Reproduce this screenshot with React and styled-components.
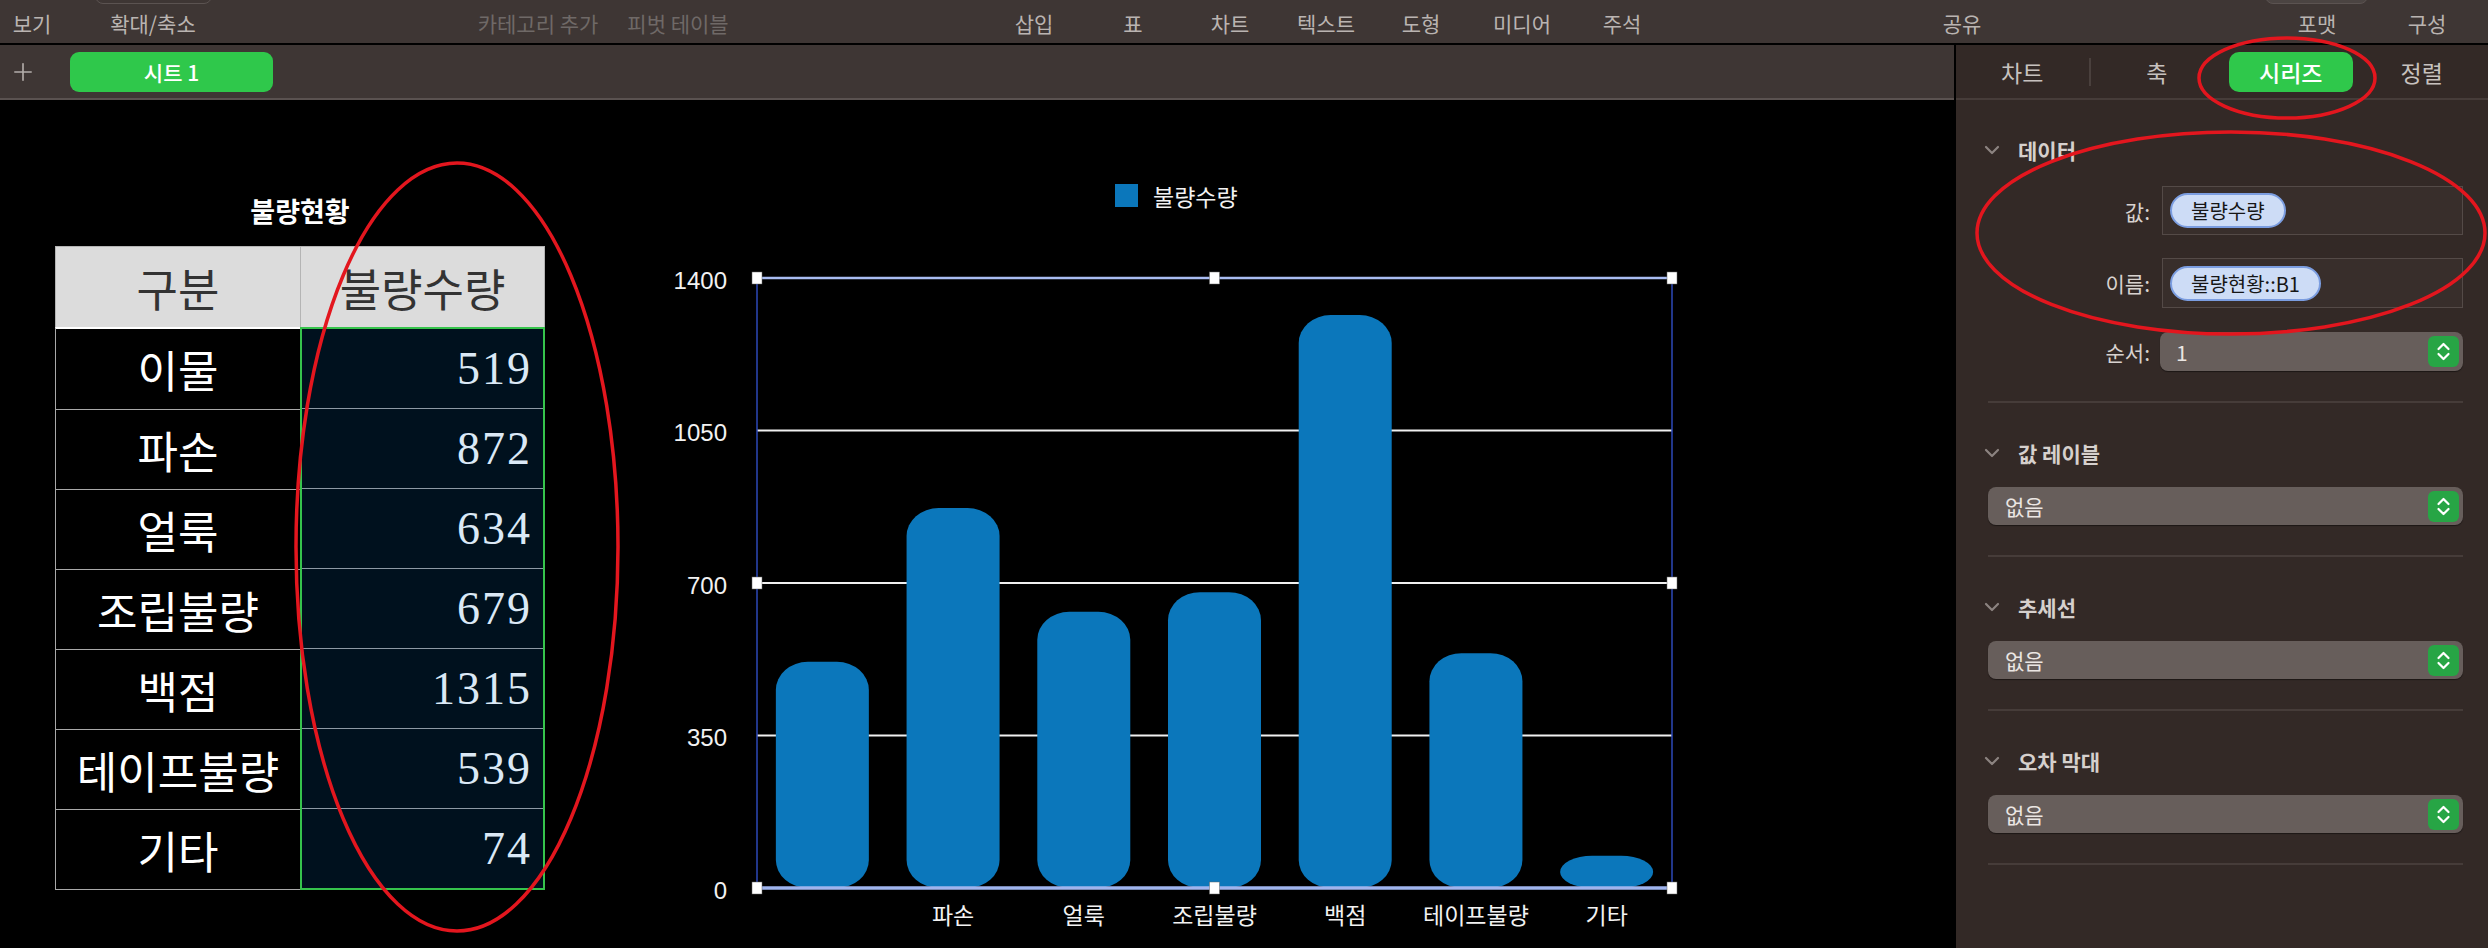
import React from 'react';
import styled, { createGlobalStyle } from 'styled-components';
import { Plus } from 'lucide-react';

const KR = `"Noto Sans CJK KR", "Noto Sans", sans-serif`;

const GlobalStyle = createGlobalStyle`
  html, body {
    margin: 0;
    padding: 0;
    background: #000;
  }
  body {
    width: 2488px;
    height: 948px;
    overflow: hidden;
    font-family: ${KR};
  }
  * {
    box-sizing: border-box;
  }
`;

const Page = styled.div`
  position: relative;
  width: 2488px;
  height: 948px;
  display: flex;
  flex-direction: column;
  background: #000;
  overflow: hidden;
`;

/* ---------- top toolbar ---------- */

const Toolbar = styled.div`
  position: relative;
  flex: none;
  height: 45px;
  padding-top: 4px;
  display: flex;
  align-items: center;
  background: #3e3634;
  border-bottom: 2px solid #000;
`;

const ToolSlot = styled.div`
  flex: none;
  width: 90px;
  margin-left: ${(p) => p.$ml}px;
  display: flex;
  justify-content: center;
  white-space: nowrap;
  font-size: 21px;
  line-height: 1;
  color: ${(p) => (p.$dim ? '#6f6967' : '#bab4b1')};
`;

const TopNub = styled.div`
  position: absolute;
  top: -22px;
  left: ${(p) => p.$left}px;
  width: ${(p) => p.$w}px;
  height: 26px;
  border-radius: 8px;
  border: 1px solid #5b5351;
  background: ${(p) => (p.$filled ? '#4b4442' : 'transparent')};
`;

/* ---------- body ---------- */

const Body = styled.div`
  flex: 1;
  display: flex;
  min-height: 0;
`;

const Workspace = styled.div`
  width: 1954px;
  flex: none;
  display: flex;
  flex-direction: column;
`;

const SheetBar = styled.div`
  flex: none;
  height: 55px;
  display: flex;
  align-items: center;
  padding-left: 9px;
  background: #3e3634;
  border-bottom: 2px solid #5a5250;
  color: #b3adaa;
`;

const SheetTab = styled.div`
  margin-left: 33px;
  width: 203px;
  height: 40px;
  border-radius: 9px;
  background: #2fc84b;
  color: #fff;
  font-size: 21px;
  font-weight: 500;
  display: flex;
  align-items: center;
  justify-content: center;
`;

const Canvas = styled.div`
  flex: 1;
  background: #000;
  display: flex;
  align-items: flex-start;
  padding-left: 55px;
`;

/* ---------- table ---------- */

const TableBlock = styled.div`
  margin-top: 96px;
  width: 490px;
  display: flex;
  flex-direction: column;
`;

const TableTitle = styled.div`
  height: 30px;
  line-height: 30px;
  margin-bottom: 20px;
  text-align: center;
  color: #fff;
  font-size: 27px;
  font-weight: 700;
`;

const Grid = styled.div`
  display: grid;
  grid-template-columns: 245px 245px;
`;

const HeadCell = styled.div`
  height: 81px;
  background: #dcdcdc;
  border-top: 1px solid #b4b4b4;
  border-left: 1px solid #b4b4b4;
  border-right: ${(p) => (p.$last ? '1px solid #b4b4b4' : 'none')};
  display: flex;
  align-items: center;
  justify-content: center;
  font-size: 45px;
  line-height: 1;
  color: #333;
`;

const NameCol = styled.div`
  display: flex;
  flex-direction: column;
  border-top: 2px solid #fff;
  border-left: 1px solid #a9a9a9;
  border-bottom: 1px solid #a9a9a9;
`;

const NameCell = styled.div`
  height: 80px;
  border-top: ${(p) => (p.$first ? 'none' : '1px solid #a9a9a9')};
  display: flex;
  align-items: center;
  justify-content: center;
  color: #fff;
  font-size: 44px;
  line-height: 1;
  white-space: nowrap;
`;

const ValueCol = styled.div`
  display: flex;
  flex-direction: column;
  border: 2px solid #36c44c;
  background: #00111e;
`;

const ValueCell = styled.div`
  flex: 1;
  border-top: ${(p) => (p.$first ? 'none' : '1px solid #8d99a4')};
  display: flex;
  align-items: center;
  justify-content: flex-end;
  padding-right: 11px;
  color: #dbe9f6;
  font-family: 'Liberation Serif', 'DejaVu Serif', serif;
  font-size: 46px;
  letter-spacing: 2px;
  line-height: 1;
`;

/* ---------- chart ---------- */

const ChartSvg = styled.svg`
  flex: none;
  margin-left: 115px;
  margin-top: 70px;
  overflow: visible;
`;

const AxisText = styled.text`
  font-family: 'Liberation Sans', Arial, sans-serif;
  font-size: 24px;
  fill: #f2f2f2;
`;

const CatText = styled.text`
  font-family: ${KR};
  font-size: 23px;
  fill: #f2f2f2;
`;

/* ---------- right panel ---------- */

const Panel = styled.div`
  flex: 1;
  border-left: 2px solid #000;
  background: #332926;
  display: flex;
  flex-direction: column;
`;

const PanelTabs = styled.div`
  flex: none;
  height: 55px;
  display: flex;
  align-items: center;
  border-bottom: 2px solid #463c39;
`;

const Segment = styled.div`
  flex: 1;
  height: 100%;
  display: flex;
  align-items: center;
  justify-content: center;
  font-size: 23px;
  color: #c7c1be;
`;

const SegDivider = styled.div`
  flex: none;
  width: 2px;
  height: 28px;
  background: #4a403d;
`;

const ActivePill = styled.div`
  width: calc(100% - 9px);
  height: 40px;
  margin-left: 6px;
  margin-right: 3px;
  border-radius: 10px;
  background: #2fc84b;
  color: #fff;
  display: flex;
  align-items: center;
  justify-content: center;
  font-size: 23px;
  font-weight: 500;
`;

const Section = styled.div`
  margin: 0 25px 0 32px;
  padding: ${(p) => p.$top}px 0 30px;
  border-bottom: 2px solid #463c39;
  display: flex;
  flex-direction: column;
`;

const SectionHead = styled.div`
  height: 30px;
  display: flex;
  align-items: center;
  margin-left: -4px;
  gap: 18px;
  color: #d6d0cd;
  font-size: 21px;
  font-weight: 700;
`;

const FieldRow = styled.div`
  margin-top: ${(p) => p.$mt}px;
  display: grid;
  grid-template-columns: 162px 1fr;
  column-gap: ${(p) => p.$gap || 12}px;
  align-items: center;
`;

const FieldLabel = styled.div`
  text-align: right;
  font-size: 21px;
  color: #d8d2cf;
`;

const FieldBox = styled.div`
  height: ${(p) => p.$h}px;
  background: #382e2b;
  border: 1px solid #544a47;
  display: flex;
  align-items: center;
  padding-left: 7px;
`;

const Token = styled.div`
  height: 35px;
  padding: 0 19px;
  border-radius: 18px;
  background: #cddcf6;
  border: 2px solid #7b9de0;
  color: #161616;
  font-size: 20px;
  display: flex;
  align-items: center;
`;

const Popup = styled.div`
  height: ${(p) => p.$h || 38}px;
  margin-top: ${(p) => p.$mt || 0}px;
  border-radius: 8px;
  background: #675e5b;
  box-shadow: 0 1px 1px rgba(0, 0, 0, 0.45);
  display: flex;
  align-items: center;
  padding: 0 4px 0 ${(p) => p.$pl || 17}px;
`;

const PopupText = styled.div`
  flex: 1;
  font-size: 21px;
  color: #ebe6e3;
`;

const Stepper = styled.div`
  width: 31px;
  height: 31px;
  border-radius: 6px;
  background: #27a545;
  display: flex;
  align-items: center;
  justify-content: center;
`;

const Annotation = styled.svg`
  position: absolute;
  top: 0;
  left: 0;
  pointer-events: none;
`;

/* ---------- data ---------- */

const toolItems = [
  ['보기', 32],
  ['확대/축소', 153],
  ['카테고리 추가', 538, true],
  ['피벗 테이블', 678, true],
  ['삽입', 1034],
  ['표', 1133],
  ['차트', 1230],
  ['텍스트', 1326],
  ['도형', 1421],
  ['미디어', 1522],
  ['주석', 1622],
  ['공유', 1962],
  ['포맷', 2317],
  ['구성', 2427],
];

const rows = [
  ['이물', 519],
  ['파손', 872],
  ['얼룩', 634],
  ['조립불량', 679],
  ['백점', 1315],
  ['테이프불량', 539],
  ['기타', 74],
];

const Chevron = () => (
  <svg width="16" height="10" viewBox="0 0 16 10">
    <polyline points="2,2 8,8 14,2" fill="none" stroke="#8c8380" strokeWidth="2.2" strokeLinecap="round" strokeLinejoin="round" />
  </svg>
);

const StepIcon = () => (
  <svg width="31" height="31" viewBox="0 0 31 31">
    <polyline points="10.5,13 15.5,8 20.5,13" fill="none" stroke="#fff" strokeWidth="2.2" strokeLinecap="round" strokeLinejoin="round" />
    <polyline points="10.5,18 15.5,23 20.5,18" fill="none" stroke="#fff" strokeWidth="2.2" strokeLinecap="round" strokeLinejoin="round" />
  </svg>
);

const Chart = () => {
  const left = 97;
  const right = 1012;
  const top = 108;
  const bottom = 718;
  const slot = (right - left) / rows.length;
  const barW = 93;
  const toY = (v) => bottom - (v / 1400) * (bottom - top);
  const ticks = [1400, 1050, 700, 350, 0];
  const midX = (left + right) / 2;
  const midY = (top + bottom) / 2;
  const handles = [
    [left, top], [midX, top], [right, top],
    [left, midY], [right, midY],
    [left, bottom], [midX, bottom], [right, bottom],
  ];

  return (
    <ChartSvg width="1040" height="770" viewBox="0 0 1040 770">
      <rect x="455" y="14" width="23" height="23" fill="#0b77bb" />
      <CatText x="493" y="26" dominantBaseline="central">불량수량</CatText>

      {ticks.slice(1, 4).map((t) => (
        <line key={t} x1={left} x2={right} y1={toY(t)} y2={toY(t)} stroke="#f0f0f0" strokeWidth="2" />
      ))}

      {rows.map(([name, v], i) => {
        const h = (v / 1400) * (bottom - top);
        const x = left + i * slot + (slot - barW) / 2;
        return (
          <rect
            key={name}
            x={x}
            y={bottom - h}
            width={barW}
            height={h}
            rx={32}
            ry={Math.min(28, h / 2)}
            fill="#0b77bb"
          />
        );
      })}

      <line x1={left} x2={left} y1={top} y2={bottom} stroke="#2c48b8" strokeWidth="1.5" />
      <line x1={right} x2={right} y1={top} y2={bottom} stroke="#2c48b8" strokeWidth="1.5" />
      <line x1={left} x2={right} y1={top} y2={top} stroke="#a9bcf2" strokeWidth="2.5" />
      <line x1={left} x2={right} y1={bottom} y2={bottom} stroke="#9fb4ee" strokeWidth="3.5" />

      {ticks.map((t) => (
        <AxisText key={t} x="67" y={toY(t) + 2} textAnchor="end" dominantBaseline="central">
          {t}
        </AxisText>
      ))}

      {rows.map(([name], i) =>
        i === 0 ? null : (
          <CatText key={name} x={left + i * slot + slot / 2} y="744" textAnchor="middle" dominantBaseline="central">
            {name}
          </CatText>
        )
      )}

      {handles.map(([hx, hy], i) => (
        <rect key={i} x={hx - 5} y={hy - 6} width="10" height="12" fill="#fff" stroke="#666" strokeWidth="0.5" />
      ))}
    </ChartSvg>
  );
};

const App = () => {
  let prevEnd = 0;
  const slots = toolItems.map(([label, center, dim]) => {
    const ml = center - 45 - prevEnd;
    prevEnd = center + 45;
    return (
      <ToolSlot key={label} $ml={ml} $dim={dim}>
        {label}
      </ToolSlot>
    );
  });

  return (
    <Page>
      <GlobalStyle />
      <Toolbar>
        <TopNub $left={95} $w={117} />
        <TopNub $left={2265} $w={103} $filled />
        {slots}
      </Toolbar>

      <Body>
        <Workspace>
          <SheetBar>
            <Plus size={28} strokeWidth={1.4} />
            <SheetTab>시트 1</SheetTab>
          </SheetBar>

          <Canvas>
            <TableBlock>
              <TableTitle>불량현황</TableTitle>
              <Grid>
                <HeadCell>구분</HeadCell>
                <HeadCell $last>불량수량</HeadCell>
                <NameCol>
                  {rows.map(([name], i) => (
                    <NameCell key={name} $first={i === 0}>
                      {name}
                    </NameCell>
                  ))}
                </NameCol>
                <ValueCol>
                  {rows.map(([name, v], i) => (
                    <ValueCell key={name} $first={i === 0}>
                      {v}
                    </ValueCell>
                  ))}
                </ValueCol>
              </Grid>
            </TableBlock>

            <Chart />
          </Canvas>
        </Workspace>

        <Panel>
          <PanelTabs>
            <Segment>차트</Segment>
            <SegDivider />
            <Segment>축</Segment>
            <Segment>
              <ActivePill>시리즈</ActivePill>
            </Segment>
            <Segment>정렬</Segment>
          </PanelTabs>

          <Section $top={35}>
            <SectionHead>
              <Chevron />
              데이터
            </SectionHead>
            <FieldRow $mt={21}>
              <FieldLabel>값:</FieldLabel>
              <FieldBox $h={49}>
                <Token>불량수량</Token>
              </FieldBox>
            </FieldRow>
            <FieldRow $mt={23}>
              <FieldLabel>이름:</FieldLabel>
              <FieldBox $h={50}>
                <Token>불량현황::B1</Token>
              </FieldBox>
            </FieldRow>
            <FieldRow $mt={24} $gap={10}>
              <FieldLabel>순서:</FieldLabel>
              <Popup $h={39} $pl={16}>
                <PopupText>1</PopupText>
                <Stepper>
                  <StepIcon />
                </Stepper>
              </Popup>
            </FieldRow>
          </Section>

          {['값 레이블', '추세선', '오차 막대'].map((title) => (
            <Section key={title} $top={35}>
              <SectionHead>
                <Chevron />
                {title}
              </SectionHead>
              <Popup $mt={19}>
                <PopupText>없음</PopupText>
                <Stepper>
                  <StepIcon />
                </Stepper>
              </Popup>
            </Section>
          ))}
        </Panel>
      </Body>

      <Annotation width="2488" height="948" viewBox="0 0 2488 948">
        <ellipse cx="457" cy="547" rx="161" ry="384" fill="none" stroke="#e3161e" strokeWidth="3.5" />
        <ellipse cx="2287" cy="78" rx="88" ry="40" fill="none" stroke="#e3161e" strokeWidth="3.5" />
        <ellipse cx="2231" cy="233" rx="254" ry="101" fill="none" stroke="#e3161e" strokeWidth="3.5" />
      </Annotation>
    </Page>
  );
};

export default App;
